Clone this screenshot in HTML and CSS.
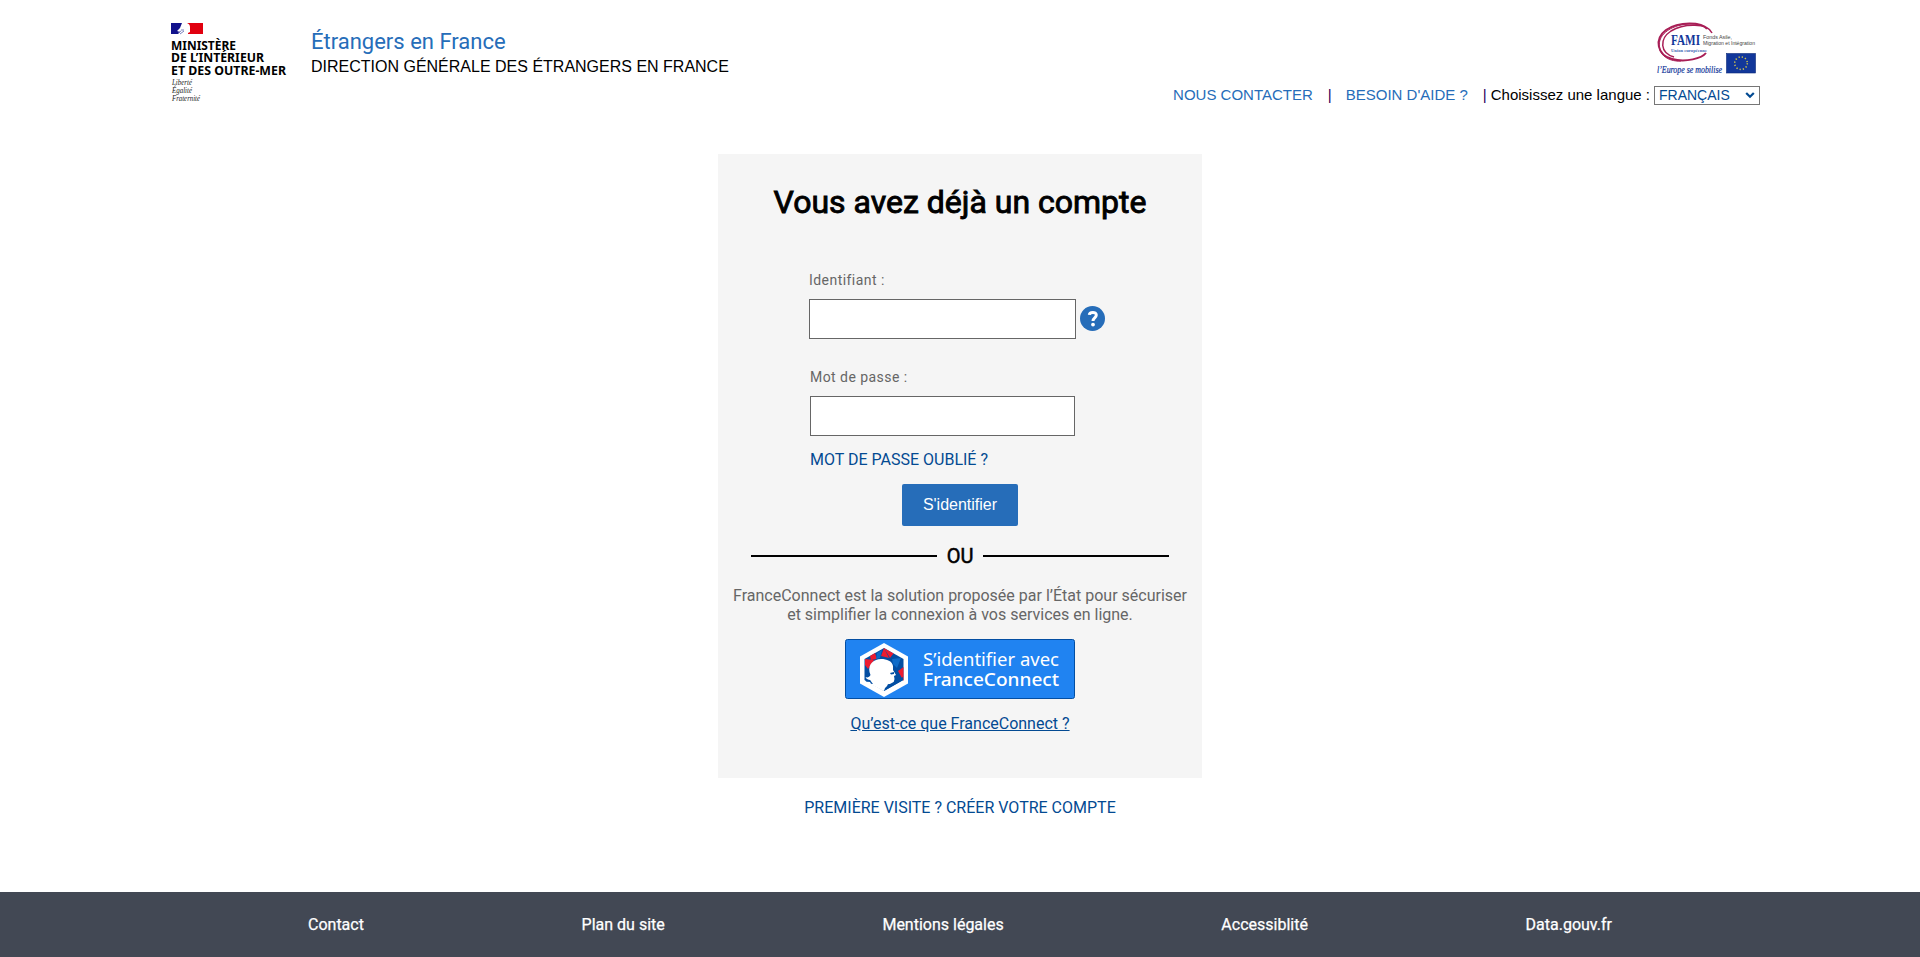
FILE: index.html
```html
<!DOCTYPE html>
<html lang="fr">
<head>
<meta charset="utf-8">
<title>Étrangers en France</title>
<link rel="stylesheet" href="styles.css">
</head>
<body>
<header class="header">
  <svg class="logo" width="118" height="84" viewBox="0 0 118 84" role="img" aria-label="Ministère de l'Intérieur">
    <rect x="0" y="0" width="14" height="11" fill="#12128c"/>
    <rect x="18" y="0" width="14" height="11" fill="#e1000f"/>
    <path d="M11 0h8v11H7l2-2-3-1 3-3z" fill="#fff"/>
    <path d="M16 0q3 1 3 4l1 2-1 1v2l-2 1v1h3V0z" fill="#e1000f"/>
    <path d="M7 10l3-2m-1 3l4-3m-3-1h3" stroke="#5560ac" stroke-width=".8"/>
    <g class="logo-name">
      <text x="0" y="26.500" textLength="65" lengthAdjust="spacingAndGlyphs">MINISTÈRE</text>
      <text x="0" y="39" textLength="93" lengthAdjust="spacingAndGlyphs">DE L’INTÉRIEUR</text>
      <text x="0" y="51.500" textLength="115" lengthAdjust="spacingAndGlyphs">ET DES OUTRE-MER</text>
    </g>
    <g class="logo-motto">
      <text x="1" y="62" textLength="20" lengthAdjust="spacingAndGlyphs">Liberté</text>
      <text x="1" y="70" textLength="20" lengthAdjust="spacingAndGlyphs">Égalité</text>
      <text x="1" y="78" textLength="28" lengthAdjust="spacingAndGlyphs">Fraternité</text>
    </g>
  </svg>
  <div class="brand">
    <div class="brand-title">Étrangers en France</div>
    <div class="brand-sub">DIRECTION GÉNÉRALE DES ÉTRANGERS EN FRANCE</div>
  </div>
  <div class="tools">
    <svg class="fami" width="103" height="56" viewBox="0 0 103 56" role="img" aria-label="FAMI">
      <g fill="none" stroke="#a81e56">
        <path d="M50 7C45 0 22-1 9 8-3 17 0 33 15 37c14 4 30-1 34-6" stroke-width="2"/>
        <path d="M55 11C51 1 27 1 14 9 2 17 3 31 17 35" stroke-width="1.5"/>
        <path d="M44 3C27-1 7 6 3 18-1 31 10 40 24 39" stroke-width="1"/>
      </g>
      <text class="fami-name" x="14" y="23" textLength="29" lengthAdjust="spacingAndGlyphs">FAMI</text>
      <text class="fami-union" x="14" y="30" textLength="36" lengthAdjust="spacingAndGlyphs">Union européenne</text>
      <g class="fami-desc">
        <text x="46" y="16.500" textLength="29" lengthAdjust="spacingAndGlyphs">Fonds Asile,</text>
        <text x="46" y="22.700" textLength="52" lengthAdjust="spacingAndGlyphs">Migration et Intégration</text>
      </g>
      <text class="fami-slogan" x="0" y="51" textLength="65" lengthAdjust="spacingAndGlyphs">l’Europe se mobilise</text>
      <rect x="69.500" y="31.500" width="29" height="19.500" fill="#12379a" stroke="#0b2a78" stroke-width=".6"/>
      <circle cx="84" cy="41.200" r="6.300" fill="none" stroke="#d8c94a" stroke-width="1.500" stroke-dasharray="1.200 2.100"/>
    </svg>
    <nav class="nav">
      <a class="nav-contact">NOUS CONTACTER</a>
      <span class="bar bar-first">|</span>
      <a class="nav-help">BESOIN D'AIDE ?</a>
      <span class="bar">|</span>
      <span class="lang-label">Choisissez une langue :</span>
      <div class="lang">FRANÇAIS<svg width="10" height="7" viewBox="0 0 10 7"><path d="M1.200 1L5 4.800 8.800 1" fill="none" stroke="#034a92" stroke-width="2.200"/></svg></div>
    </nav>
  </div>
</header>
<main class="main">
  <section class="panel">
    <h1 class="title">Vous avez déjà un compte</h1>
    <div class="form">
      <label class="label" for="user">Identifiant :</label>
      <div class="field">
        <input class="input input-user" id="user" type="text">
        <svg class="help" width="25" height="25" viewBox="0 0 25 25"><circle cx="12.500" cy="12.500" r="12.500" fill="#266db9"/><path d="M9.300 8.900C9.500 5.700 16.300 5.400 16.300 9.100c0 2.800-3.300 2.800-3.300 5.900" fill="none" stroke="#fff" stroke-width="3"/><circle cx="13" cy="18.600" r="1.900" fill="#fff"/></svg>
      </div>
      <label class="label label-pass" for="pass">Mot de passe :</label>
      <input class="input input-pass" id="pass" type="password">
      <a class="link forgot">MOT DE PASSE OUBLIÉ ?</a>
    </div>
    <button class="submit" type="button">S'identifier</button>
    <div class="or">OU</div>
    <p class="intro">FranceConnect est la solution proposée par l’État pour sécuriser<br>et simplifier la connexion à vos services en ligne.</p>
    <svg class="fc" width="230" height="60" viewBox="0 0 230 60" role="img" aria-label="S’identifier avec FranceConnect">
      <rect x=".5" y=".5" width="229" height="59" rx="2" fill="#2083f1" stroke="#034ea2"/>
      <path d="M39 4L63 17.500V44.500L39 58 15 44.500V17.500z" fill="#fff"/>
      <path d="M39 9L58.500 20V41L39 52 19.500 41V20z" fill="#034ea2"/>
      <path d="M39 9l9.500 5.500L45 19zM39 9l-3 8 8 2zM20 20l9 1-6 9-3-4zM53 32l5.500-4v14zM25 17l5-3 2 6-6 1z" fill="#ed1c30"/>
      <path d="M47 20l9-1-4 10-4-4zM32 14l5-3-2 8-4 1z" fill="#0e6bc8"/>
      <path d="M24.500 33C23 25 29 20 36 20c6 0 11 2 12 7l0 4 3 5-2 1 .5 3-1 4c-2 2-6 0-6 2l0 3-4 3-17-9 5-2c-3 1-5-1-6-3 2 1 4 0 5-2z" fill="#fff"/>
      <path d="M20 40l5 1 3 4-2-.3-1-1.700-4-.5zM45 34l4-1v2l-3 .5zM43 46l15-8v3l-19 11 1-3z" fill="#034ea2"/>
      <g class="fc-text">
        <text x="78" y="26.700" textLength="136" lengthAdjust="spacingAndGlyphs">S’identifier avec</text>
        <text class="fc-name" x="78" y="46.700" textLength="136" lengthAdjust="spacingAndGlyphs">FranceConnect</text>
      </g>
    </svg>
    <a class="link about">Qu’est-ce que FranceConnect ?</a>
  </section>
  <a class="link signup">PREMIÈRE VISITE ? CRÉER VOTRE COMPTE</a>
</main>
<footer class="footer">
  <a>Contact</a><a>Plan du site</a><a>Mentions légales</a><a>Accessiblité</a><a>Data.gouv.fr</a>
</footer>
</body>
</html>
```
FILE: styles.css
```css
* { box-sizing: border-box; }
body {
  margin: 0;
  height: 957px;
  display: flex;
  flex-direction: column;
  background: #fff;
  color: #000;
  font: 16px/20px Roboto, sans-serif;
}
.header {
  display: flex;
  height: 154px;
  padding: 0 160px 0 171px;
}
.logo { margin-top: 23px; overflow: visible; }
.logo-name { font: 700 12px "Noto Sans", sans-serif; }
.logo-motto { font: italic 7.5px "Liberation Serif", serif; fill: #222; }
.brand { padding: 30px 0 0 22px; line-height: 24px; }
.brand-title { font-size: 22px; color: #266db9; }
.brand-sub { margin-top: 1px; font-family: "Liberation Sans", sans-serif; }
.tools {
  display: flex;
  flex-direction: column;
  align-items: flex-end;
  margin-left: auto;
  padding-top: 22px;
}
.fami { overflow: visible; }
.fami-name { font: bold 14px "Liberation Serif", serif; fill: #12379a; }
.fami-union { font: bold 5px "Liberation Serif", serif; fill: #4468b4; }
.fami-desc { font: 4.6px "Liberation Sans", sans-serif; fill: #444; }
.fami-slogan { font: italic 9.5px "Liberation Serif", serif; fill: #12379a; stroke: #12379a; stroke-width: .2px; }
.nav {
  display: flex;
  align-items: center;
  margin-top: 8px;
  height: 19px;
  font: 15px/17px "Liberation Sans", sans-serif;
  white-space: nowrap;
}
.nav a, .bar, .lang-label { padding-bottom: 2px; }
.nav a { color: #266db9; }
.bar { color: #2c005c; margin-left: 15px; }
.bar-first { margin: 0 14px 0 15px; }
.lang-label { margin-left: 4px; }
.lang {
  display: flex;
  align-items: center;
  justify-content: space-between;
  width: 106px;
  height: 19px;
  margin-left: 4px;
  padding: 0 4px;
  border: 1px solid #767676;
  color: #034a92;
  font-size: 14px;
}
.main {
  display: flex;
  flex-direction: column;
  align-items: center;
}
.panel {
  display: flex;
  flex-direction: column;
  align-items: center;
  width: 484px;
  height: 624px;
  padding-top: 28px;
  background: #f5f5f5;
}
.title {
  margin: 0;
  font-size: 32px;
  font-weight: 400;
  line-height: 40px;
  -webkit-text-stroke: 0.9px #000;
}
.form {
  display: flex;
  flex-direction: column;
  align-items: flex-start;
  width: 302px;
  margin: 48px 0 0;
}
.label {
  font-size: 14px;
  letter-spacing: .45px;
  color: #666;
}
.label-pass { margin: 28px 0 0 1px; }
.field { display: flex; align-items: flex-start; gap: 4px; margin-top: 9px; }
.help { margin-top: 7px; }
.input {
  height: 40px;
  padding: 0 8px;
  border: 1px solid #666;
  border-radius: 0;
  background: #fff;
}
.input-user { width: 267px; }
.input-pass { width: 265px; margin: 9px 0 0 1px; }
.link { color: #034a92; }
.forgot { margin: 14px 0 0 1px; }
.submit {
  width: 116px;
  height: 42px;
  margin-top: 14px;
  padding: 0;
  border: 0;
  border-radius: 2px;
  background: #266db9;
  color: #fff;
  font: 16px "Liberation Sans", sans-serif;
}
.or {
  display: flex;
  align-items: center;
  justify-content: space-between;
  width: 418px;
  height: 24px;
  margin-top: 18px;
  font-size: 20px;
  -webkit-text-stroke: 0.5px #000;
}
.or::before, .or::after {
  content: "";
  width: 186px;
  height: 2px;
  background: #000;
}
.intro {
  margin: 18px 0 15px;
  line-height: 19px;
  text-align: center;
  color: #666;
  white-space: nowrap;
}
.fc-text { font: 17.2px "Noto Sans", sans-serif; fill: #fff; }
.fc-name { font-weight: 500; }
.about { margin-top: 15px; text-decoration: underline; }
.signup { margin-top: 20px; }
.footer {
  display: flex;
  align-items: center;
  justify-content: space-between;
  height: 65px;
  margin-top: auto;
  padding: 0 308px;
  background: #424854;
  color: #fff;
  -webkit-text-stroke: 0.25px #fff;
}
```
